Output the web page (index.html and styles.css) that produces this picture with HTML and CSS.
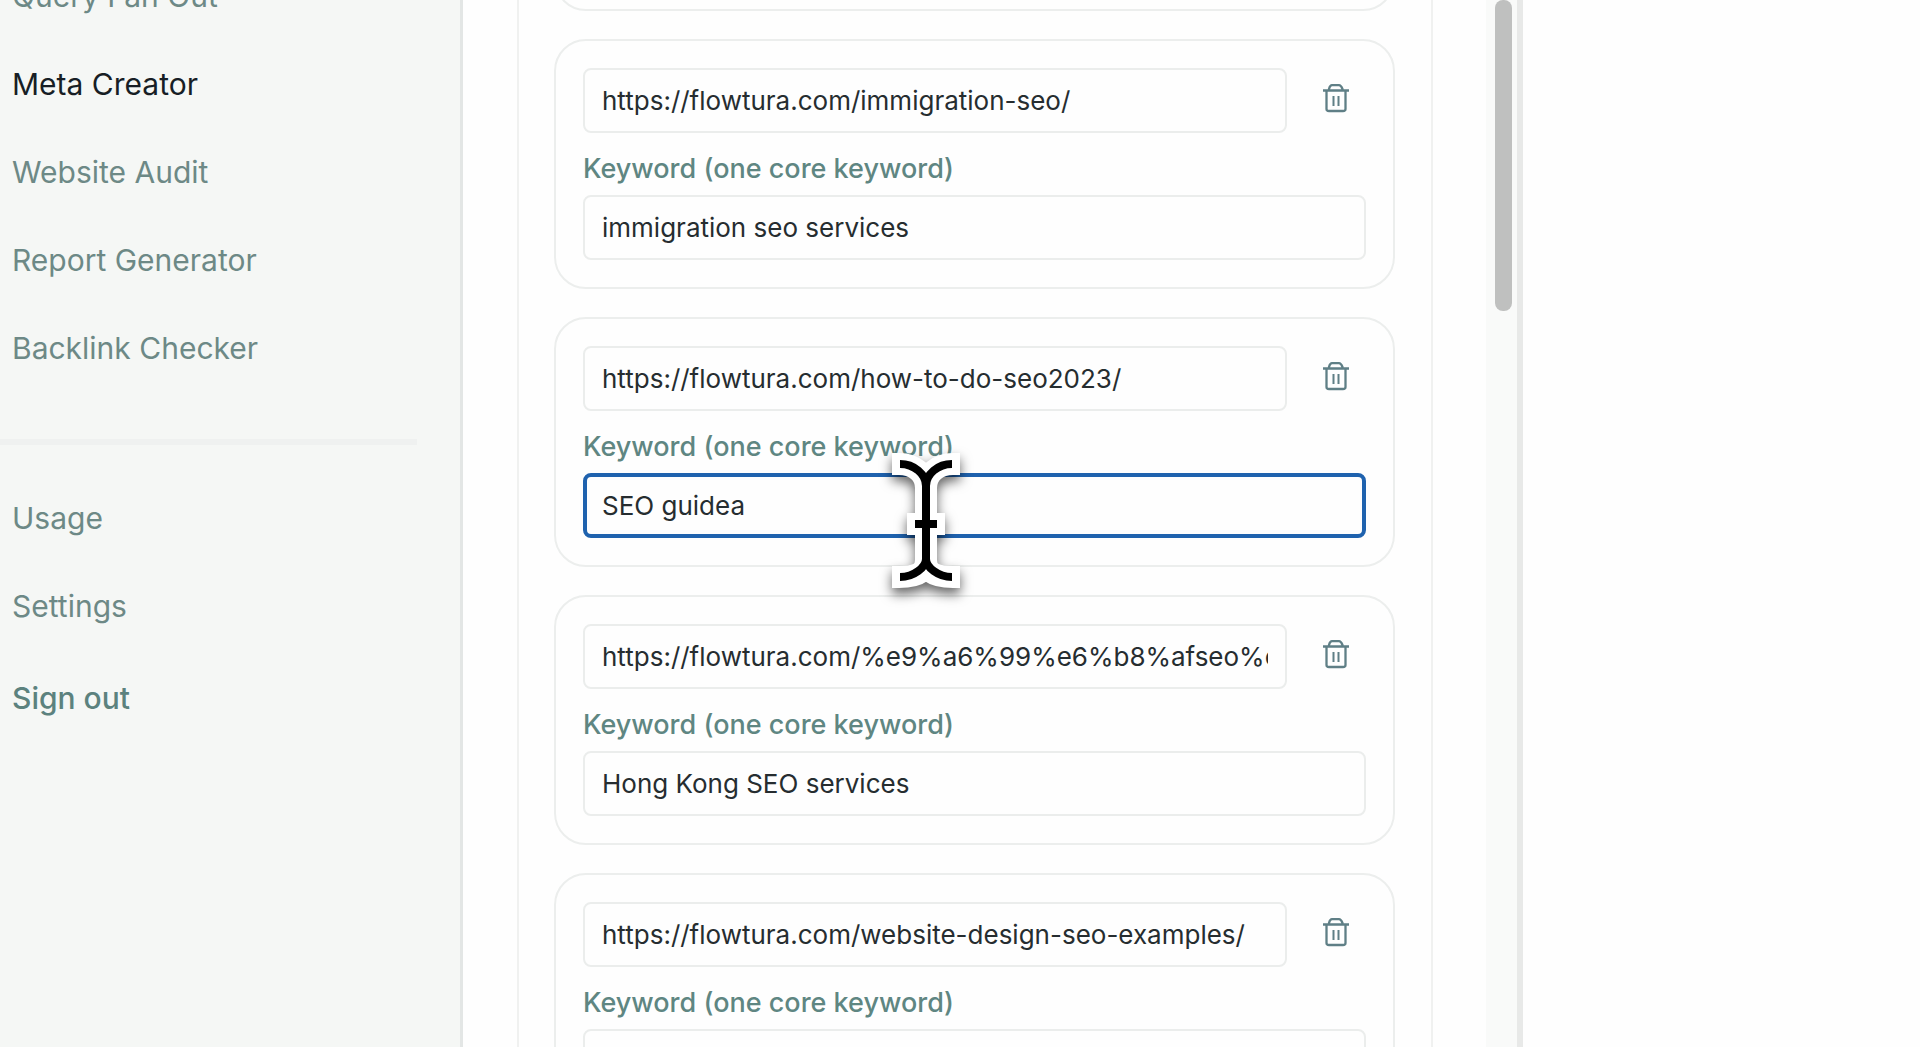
FILE: index.html
```html
<!DOCTYPE html>
<html lang="en">
<head>
    <meta charset="UTF-8">
    <meta name="viewport" content="width=device-width, initial-scale=1.0">
    <title>Meta Creator</title>
    <link rel="stylesheet" href="styles.css">
</head>
<body>

    <!-- Trash icon, shared by every row -->
    <svg class="sprite" aria-hidden="true">
        <symbol id="trash" viewBox="0 0 28 34">
            <path d="M0 6.500H26M6 6V5Q7 1.200 9 1.200H16Q18 1.200 19.500 5V6M3.500 7V25Q3.500 27 6 27H20Q22.500 27 22.500 25V7" fill="none" stroke="currentColor" stroke-width="2.300"/>
            <path d="M10.500 12V22M15.500 12V22" fill="none" stroke="currentColor" stroke-width="2"/>
        </symbol>
    </svg>

    <div class="app">
        <!-- Sidebar -->
        <aside class="sidebar">
            <nav class="nav">
                <a href="#">Query Fan Out</a>
                <a href="#" class="active">Meta Creator</a>
                <a href="#">Website Audit</a>
                <a href="#">Report Generator</a>
                <a href="#">Backlink Checker</a>
            </nav>
            <hr class="divider">
            <nav class="nav-account">
                <a href="#">Usage</a>
                <a href="#">Settings</a>
            </nav>
            <button type="button" class="sign-out">Sign out</button>
        </aside>

        <!-- Page list -->
        <main class="main">
            <form class="panel">
                <div class="card card-empty"></div>

                <div class="card">
                    <div class="url-row">
                        <input type="text" aria-label="Page URL" value="https://flowtura.com/immigration-seo/">
                        <button type="button" class="delete" aria-label="Delete"><svg><use href="#trash"/></svg></button>
                    </div>
                    <label for="keyword-1">Keyword (one core keyword)</label>
                    <input type="text" id="keyword-1" value="immigration seo services">
                </div>

                <div class="card">
                    <div class="url-row">
                        <input type="text" aria-label="Page URL" value="https://flowtura.com/how-to-do-seo2023/">
                        <button type="button" class="delete" aria-label="Delete"><svg><use href="#trash"/></svg></button>
                    </div>
                    <label for="keyword-2">Keyword (one core keyword)</label>
                    <input type="text" id="keyword-2" class="focused" value="SEO guidea">
                </div>

                <div class="card">
                    <div class="url-row">
                        <input type="text" aria-label="Page URL" value="https://flowtura.com/%e9%a6%99%e6%b8%afseo%e6%9c%8d">
                        <button type="button" class="delete" aria-label="Delete"><svg><use href="#trash"/></svg></button>
                    </div>
                    <label for="keyword-3">Keyword (one core keyword)</label>
                    <input type="text" id="keyword-3" value="Hong Kong SEO services">
                </div>

                <div class="card">
                    <div class="url-row">
                        <input type="text" aria-label="Page URL" value="https://flowtura.com/website-design-seo-examples/">
                        <button type="button" class="delete" aria-label="Delete"><svg><use href="#trash"/></svg></button>
                    </div>
                    <label for="keyword-4">Keyword (one core keyword)</label>
                    <input type="text" id="keyword-4">
                </div>
            </form>
            <div class="scrollbar"><div class="thumb"></div></div>
        </main>
    </div>

    <!-- Text cursor -->
    <svg class="cursor" viewBox="0 0 100 160" aria-hidden="true">
        <g fill="none" stroke="#fff" stroke-width="22">
            <path d="M23 24C39 24 50 34 50 48V120C50 134 39 137 23 137M77 24C61 24 50 34 50 48M50 120C50 134 61 137 77 137"/>
            <path d="M16 24H24M76 24H84M16 137H24M76 137H84M31 84H69"/>
        </g>
        <g fill="none" stroke="#000" stroke-width="8">
            <path d="M24 24C38 24 50 34 50 46V119C50 127 38 137 24 137M76 24C62 24 50 34 50 46M50 119C50 127 62 137 76 137M39 84H61"/>
        </g>
    </svg>

</body>
</html>
```
FILE: styles.css
```css
* {
    box-sizing: border-box;
}
body {
    margin: 0;
    height: 100vh;
    overflow: hidden;
    font-family: Inter, "Liberation Sans", sans-serif;
    background-color: #fefefe;
    color: #20292b;
}
button {
    padding: 0;
    border: 0;
    background: none;
    font-family: inherit;
    cursor: pointer;
}
.sprite {
    display: none;
}
.app {
    display: grid;
    grid-template-columns: 463px minmax(0, 1fr) 397px;
    height: 100vh;
    overflow: hidden;
}

/* Sidebar */
.sidebar {
    background-color: #f5f7f5;
    border-right: 3px solid #e3e6e5;
}
.nav {
    margin-top: -48px;
}
.sidebar a,
.sign-out {
    display: block;
    padding: 0 12px;
    font-size: 30px;
    line-height: 88px;
    color: #6d8986;
    text-decoration: none;
}
.sidebar a.active {
    color: #171e25;
}
.divider {
    height: 6px;
    margin: 47px 43px 29px 0;
    border: 0;
    background-color: #eff1f0;
}
.sidebar .sign-out {
    margin-top: 4px;
    font-weight: 500;
    color: #5c827e;
}

/* Main column */
.main {
    display: flex;
    border-right: 6px solid #e8e9e8;
    overflow: hidden;
}
.panel {
    flex: 1;
    min-width: 0;
    height: max-content;
    margin: 0 53px 0 54px;
    padding: 0 36px 0 35px;
    border: solid #f0f1f0;
    border-width: 0 2px;
}
.card {
    margin-bottom: 28px;
    padding: 27px;
    border: 2px solid #eceeed;
    border-radius: 32px;
}
.card-empty {
    height: 250px;
    margin-top: -239px;
}
.url-row {
    display: flex;
    gap: 20px;
}
.card input {
    display: block;
    width: 100%;
    height: 65px;
    padding: 0 17px;
    border: 2px solid #ebedec;
    border-radius: 8px;
    background-color: #fefefe;
    font-family: inherit;
    font-size: 26px;
    color: #262d30;
    outline: none;
}
.card input:focus,
.card input.focused {
    padding: 0 15px;
    border: 4px solid #1f62ae;
}
.card label {
    display: block;
    padding-top: 10px;
    font-size: 27px;
    font-weight: 500;
    line-height: 52px;
    color: #5f8682;
}
.delete {
    flex: none;
    width: 59px;
    height: 65px;
    color: #5f7f86;
}
.delete svg {
    display: block;
    width: 28px;
    height: 34px;
    margin: 0 auto;
}

/* Scrollbar */
.scrollbar {
    width: 31px;
    padding: 0 5px 0 9px;
    background-color: #f9faf9;
}
.thumb {
    height: 311px;
    border-radius: 8px;
    background-color: #bfc0bf;
}

.cursor {
    position: absolute;
    left: 876px;
    top: 440px;
    width: 100px;
    height: 160px;
    filter: drop-shadow(0 6px 6px rgba(0, 0, 0, 0.6));
    pointer-events: none;
}
```
